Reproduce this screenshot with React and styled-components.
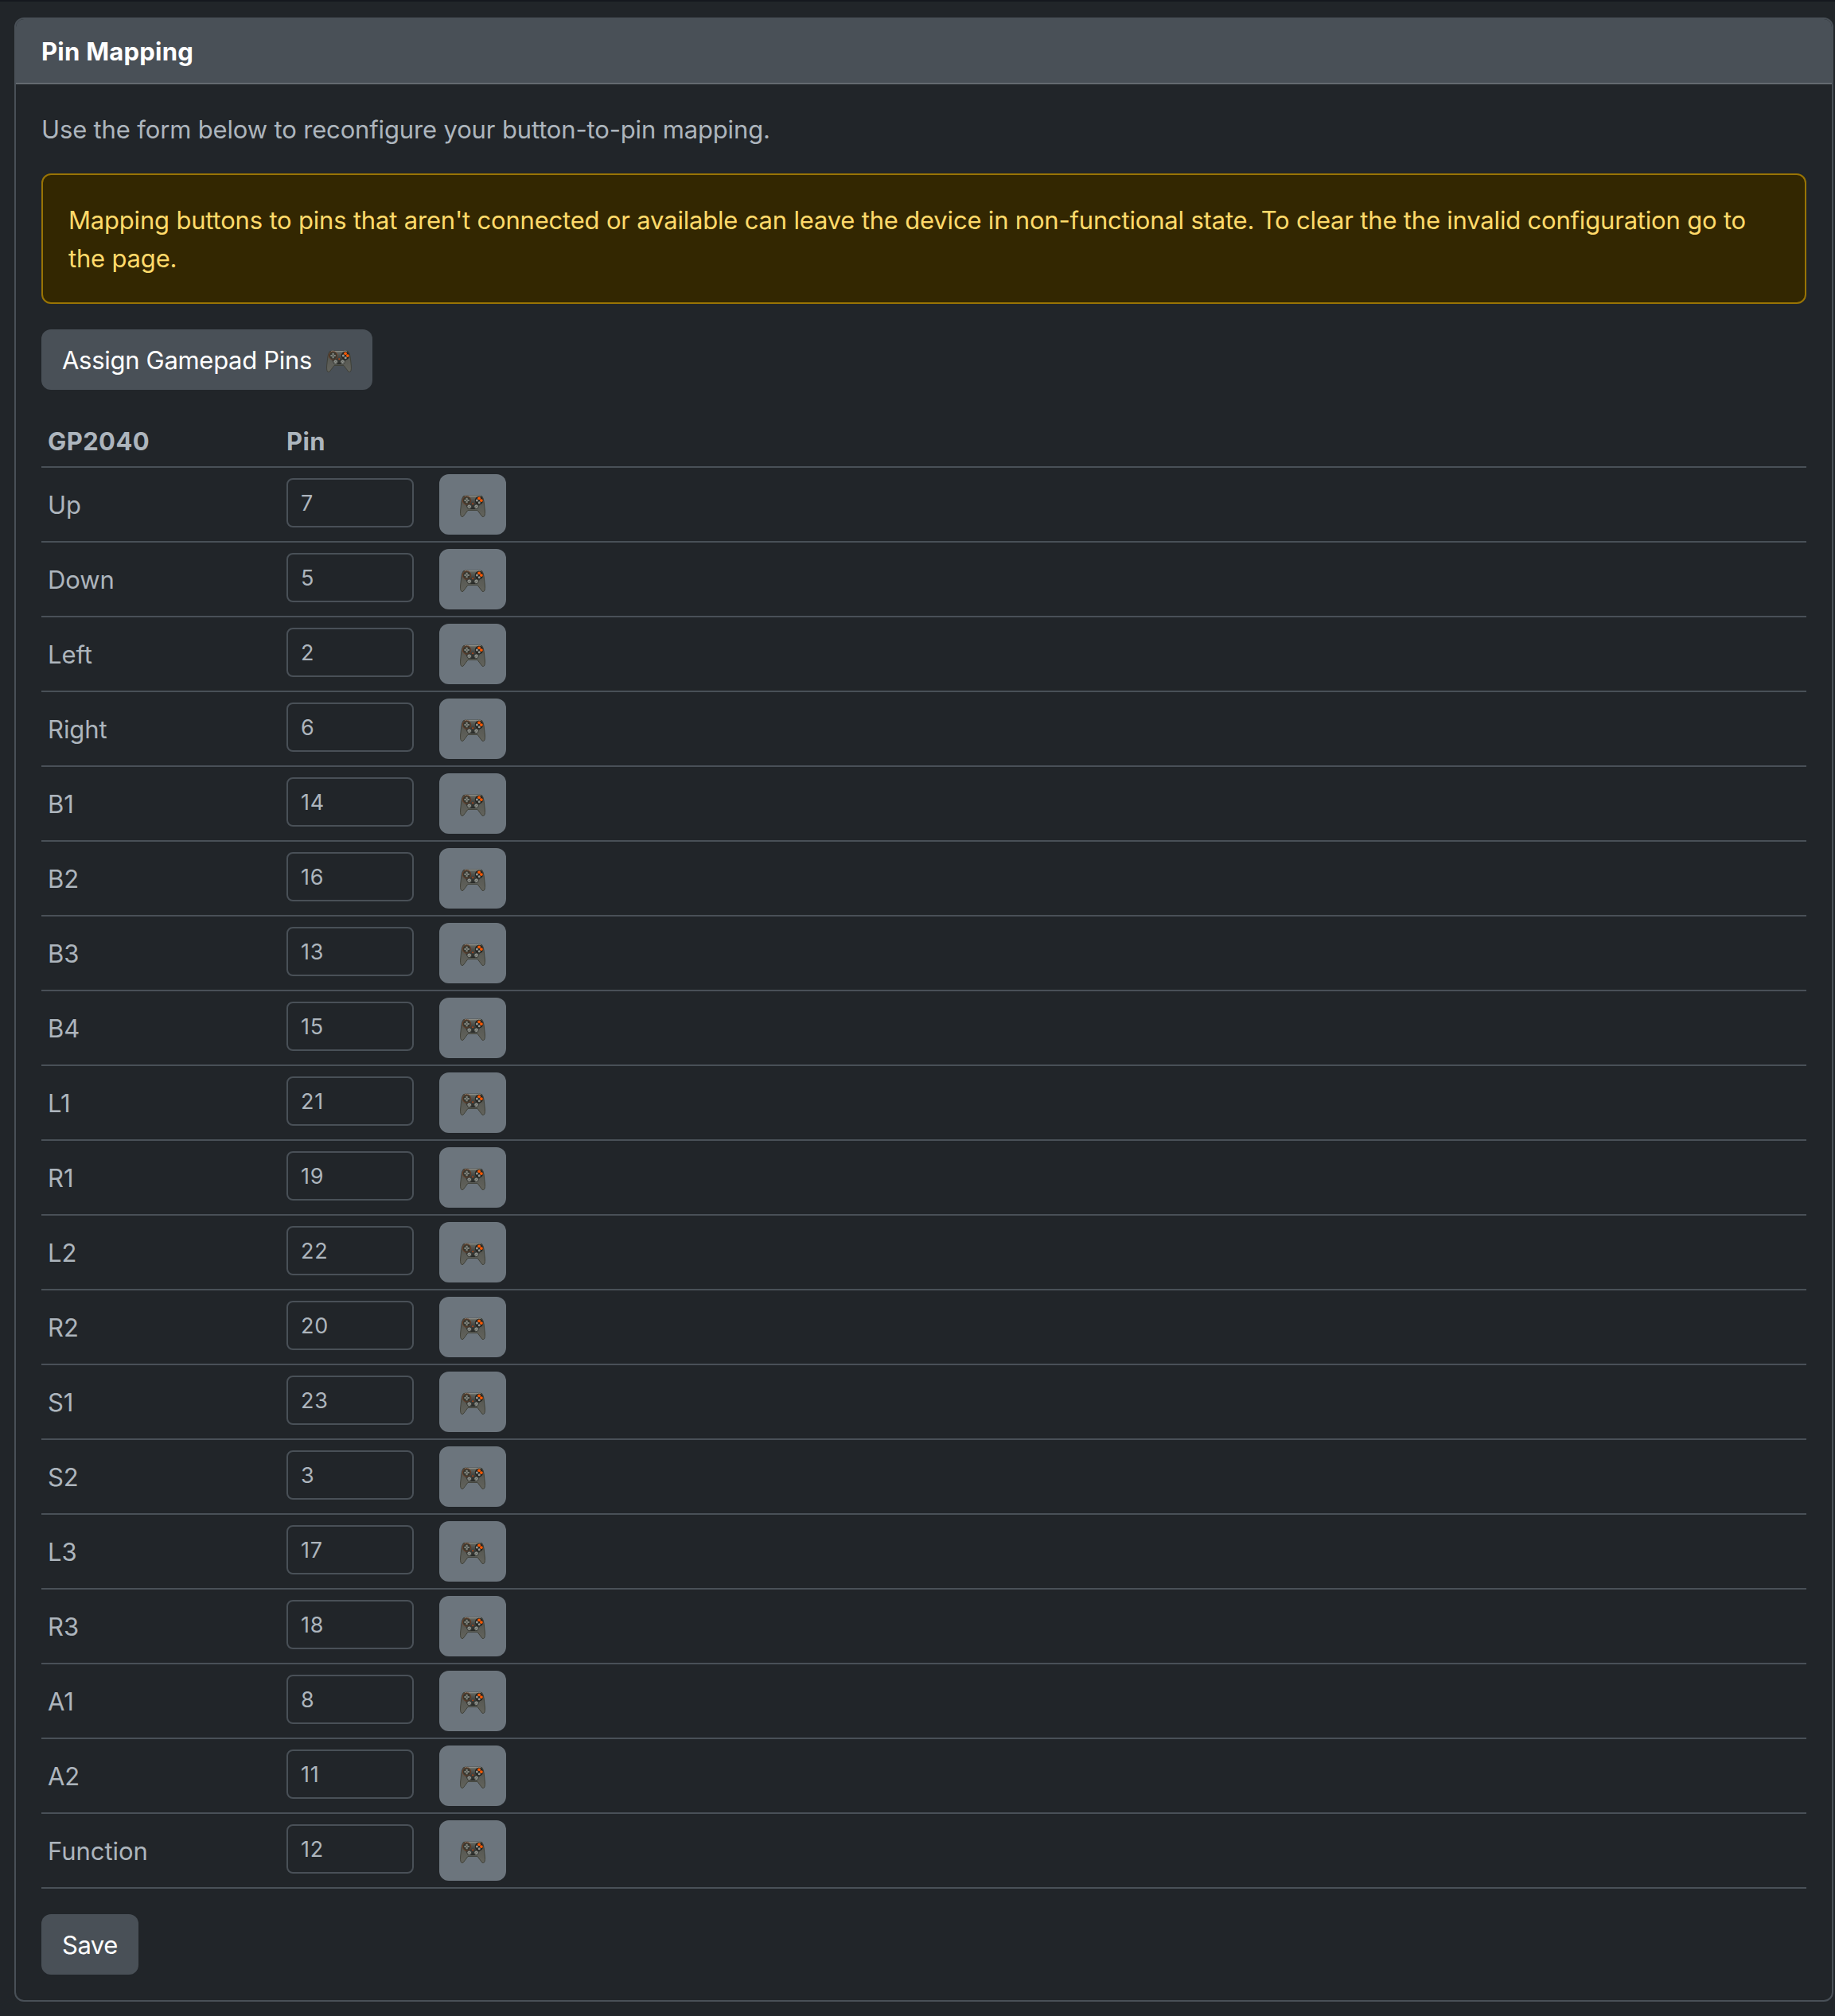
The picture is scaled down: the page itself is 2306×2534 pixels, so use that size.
import React from 'react';
import styled, { createGlobalStyle } from 'styled-components';

const GlobalStyle = createGlobalStyle`
  *, *::before, *::after { box-sizing: border-box; }
  body {
    margin: 0;
    background: #212529;
    color: #adb5bd;
    font-family: Inter, "Liberation Sans", sans-serif;
    font-size: 31px;
    line-height: 48px;
    letter-spacing: -0.19px;
    overflow: hidden;
  }
`;

const Page = styled.main`
  height: 2534px;
  padding: 20px 2px 0 18px;
  border-top: 2px solid #15181e;
`;

const Card = styled.section`
  border: 2px solid #495057;
  border-radius: 12px;
`;

const CardHeader = styled.header`
  height: 82px;
  padding: 17px 32px 15px;
  color: #fff;
  font-weight: 700;
  letter-spacing: 0.25px;
  background: #495057;
  border-bottom: 2px solid #646a70;
  border-radius: 10px 10px 0 0;
`;

const CardBody = styled.div`
  padding: 32px;
`;

const Intro = styled.p`
  margin: 0 0 31px;
  padding-top: 1px;
  letter-spacing: -0.15px;
`;

const Alert = styled.div`
  margin-bottom: 32px;
  padding: 33px 32px 31px;
  color: #ffda6a;
  background: #332701;
  border: 2px solid #997404;
  border-radius: 12px;
`;

const Button = styled.button`
  display: inline-flex;
  align-items: center;
  gap: 18px;
  height: 76px;
  padding: 2px 26px 0;
  border: 0;
  border-radius: 12px;
  background: ${(p) => (p.$secondary ? '#6c757d' : '#495057')};
  color: #fff;
  font: inherit;
  letter-spacing: -0.3px;
`;

const SaveButton = styled(Button)`
  width: 122px;
  padding-right: 0;
  letter-spacing: -0.5px;
`;

const Table = styled.table`
  width: 100%;
  margin: 32px 0;
  border-collapse: separate;
  border-spacing: 0;
  table-layout: fixed;
`;

const HeadCell = styled.th`
  width: ${(p) => p.$width || 'auto'};
  padding: 9px 8px 7px;
  text-align: left;
  font-weight: 700;
  letter-spacing: 0.4px;
  border-bottom: 2px solid #495057;
`;

const Cell = styled.td`
  height: 94px;
  padding: ${(p) => (p.$label ? '10px 8px 8px' : '8px')};
  letter-spacing: -0.05px;
  vertical-align: middle;
  border-bottom: 2px solid #495057;
`;

const PinField = styled.div`
  display: flex;
  align-items: flex-start;
  gap: 32px;
`;

const PinInput = styled.input`
  width: 160px;
  height: 62px;
  margin: 5px 0 0;
  padding: 8px 16px;
  border: 2px solid #495057;
  border-radius: 8px;
  background: #212529;
  color: #adb5bd;
  font: 27px/42px Inter, "Liberation Sans", sans-serif;
  letter-spacing: 0.8px;
`;

const Icon = styled.svg`
  display: block;
  flex: none;
  width: 32px;
  height: 28px;
  margin-top: 2px;
`;

function Gamepad() {
  return (
    <Icon viewBox="0 0 32 28" aria-hidden="true">
      <defs>
        <linearGradient id="pad-body" x1="0" y1="0" x2="0" y2="1">
          <stop offset="0" stopColor="#4c4d44" />
          <stop offset=".5" stopColor="#5a5b55" />
          <stop offset="1" stopColor="#62635c" />
        </linearGradient>
        <linearGradient id="pad-plate" x1="0" y1="0" x2="0" y2="1">
          <stop offset="0" stopColor="#666963" />
          <stop offset=".6" stopColor="#3a3c39" />
          <stop offset="1" stopColor="#282a27" />
        </linearGradient>
      </defs>
      <path d="M4.2 1.8Q8 .1 10.6 1.2L21.4 1.2Q24 .1 27.8 1.8Q29.5 4 30.2 9L31.4 20Q31.9 27.4 29.2 27.6Q27.8 27.6 27 26L22 19.4H10L5 26Q4.2 27.6 2.8 27.6Q.1 27.4.6 20L1.8 9Q2.5 4 4.2 1.8Z" fill="url(#pad-body)" stroke="#3c3d34" strokeWidth=".9" />
      <path d="M8 1.7H24L26 11L21.5 18H10.5L6 11Z" fill="url(#pad-plate)" />
      <path d="M6.2 1.5Q8.5.6 10.4 1.7H21.6Q23.5.6 25.8 1.5" fill="none" stroke="#a0a39d" strokeWidth=".9" />
      <circle cx="8.6" cy="7" r="5.2" fill="#37372f" stroke="#704027" strokeWidth=".9" />
      <path d="M8.6 3.8V10.2M5.4 7H11.8" stroke="#80837d" strokeWidth="2.2" />
      <circle cx="8.6" cy="7" r=".9" fill="#4d504b" />
      <circle cx="24" cy="7" r="5.2" fill="#242522" />
      <circle cx="24.1" cy="4.3" r="1.9" fill="#fa5a05" />
      <circle cx="26.9" cy="7.1" r="1.9" fill="#fa5a05" />
      <circle cx="21.4" cy="7" r="1.5" fill="#969993" />
      <circle cx="24.2" cy="9.8" r="1.5" fill="#969993" />
      <circle cx="16.2" cy="11.2" r="1" fill="#b5481a" />
      <circle cx="11.7" cy="14.7" r="2.8" fill="#8e918b" stroke="#30322f" strokeWidth=".9" />
      <circle cx="20.6" cy="14.7" r="2.8" fill="#8e918b" stroke="#30322f" strokeWidth=".9" />
      <path d="M10.4 15.4Q11.7 13.6 13 15.4M19.3 15.4Q20.6 13.6 21.9 15.4" fill="none" stroke="#5d605b" strokeWidth="1" />
    </Icon>
  );
}

const PINS = [
  ['Up', 7], ['Down', 5], ['Left', 2], ['Right', 6],
  ['B1', 14], ['B2', 16], ['B3', 13], ['B4', 15],
  ['L1', 21], ['R1', 19], ['L2', 22], ['R2', 20],
  ['S1', 23], ['S2', 3], ['L3', 17], ['R3', 18],
  ['A1', 8], ['A2', 11], ['Function', 12],
];

export default function App() {
  return (
    <>
      <GlobalStyle />
      <Page>
        <Card>
          <CardHeader>Pin Mapping</CardHeader>
          <CardBody>
            <Intro>Use the form below to reconfigure your button-to-pin mapping.</Intro>
            <Alert>
              Mapping buttons to pins that aren't connected or available can leave the device in
              non-functional state. To clear the the invalid configuration go to the page.
            </Alert>
            <Button type="button">
              <span>Assign Gamepad Pins</span>
              <Gamepad />
            </Button>
            <Table>
              <thead>
                <tr>
                  <HeadCell $width="300px">GP2040</HeadCell>
                  <HeadCell>Pin</HeadCell>
                </tr>
              </thead>
              <tbody>
                {PINS.map(([name, pin]) => (
                  <tr key={name}>
                    <Cell $label>{name}</Cell>
                    <Cell>
                      <PinField>
                        <PinInput type="text" defaultValue={pin} aria-label={name} />
                        <Button type="button" $secondary aria-label={`Assign ${name}`}>
                          <Gamepad />
                        </Button>
                      </PinField>
                    </Cell>
                  </tr>
                ))}
              </tbody>
            </Table>
            <SaveButton type="button">Save</SaveButton>
          </CardBody>
        </Card>
      </Page>
    </>
  );
}
